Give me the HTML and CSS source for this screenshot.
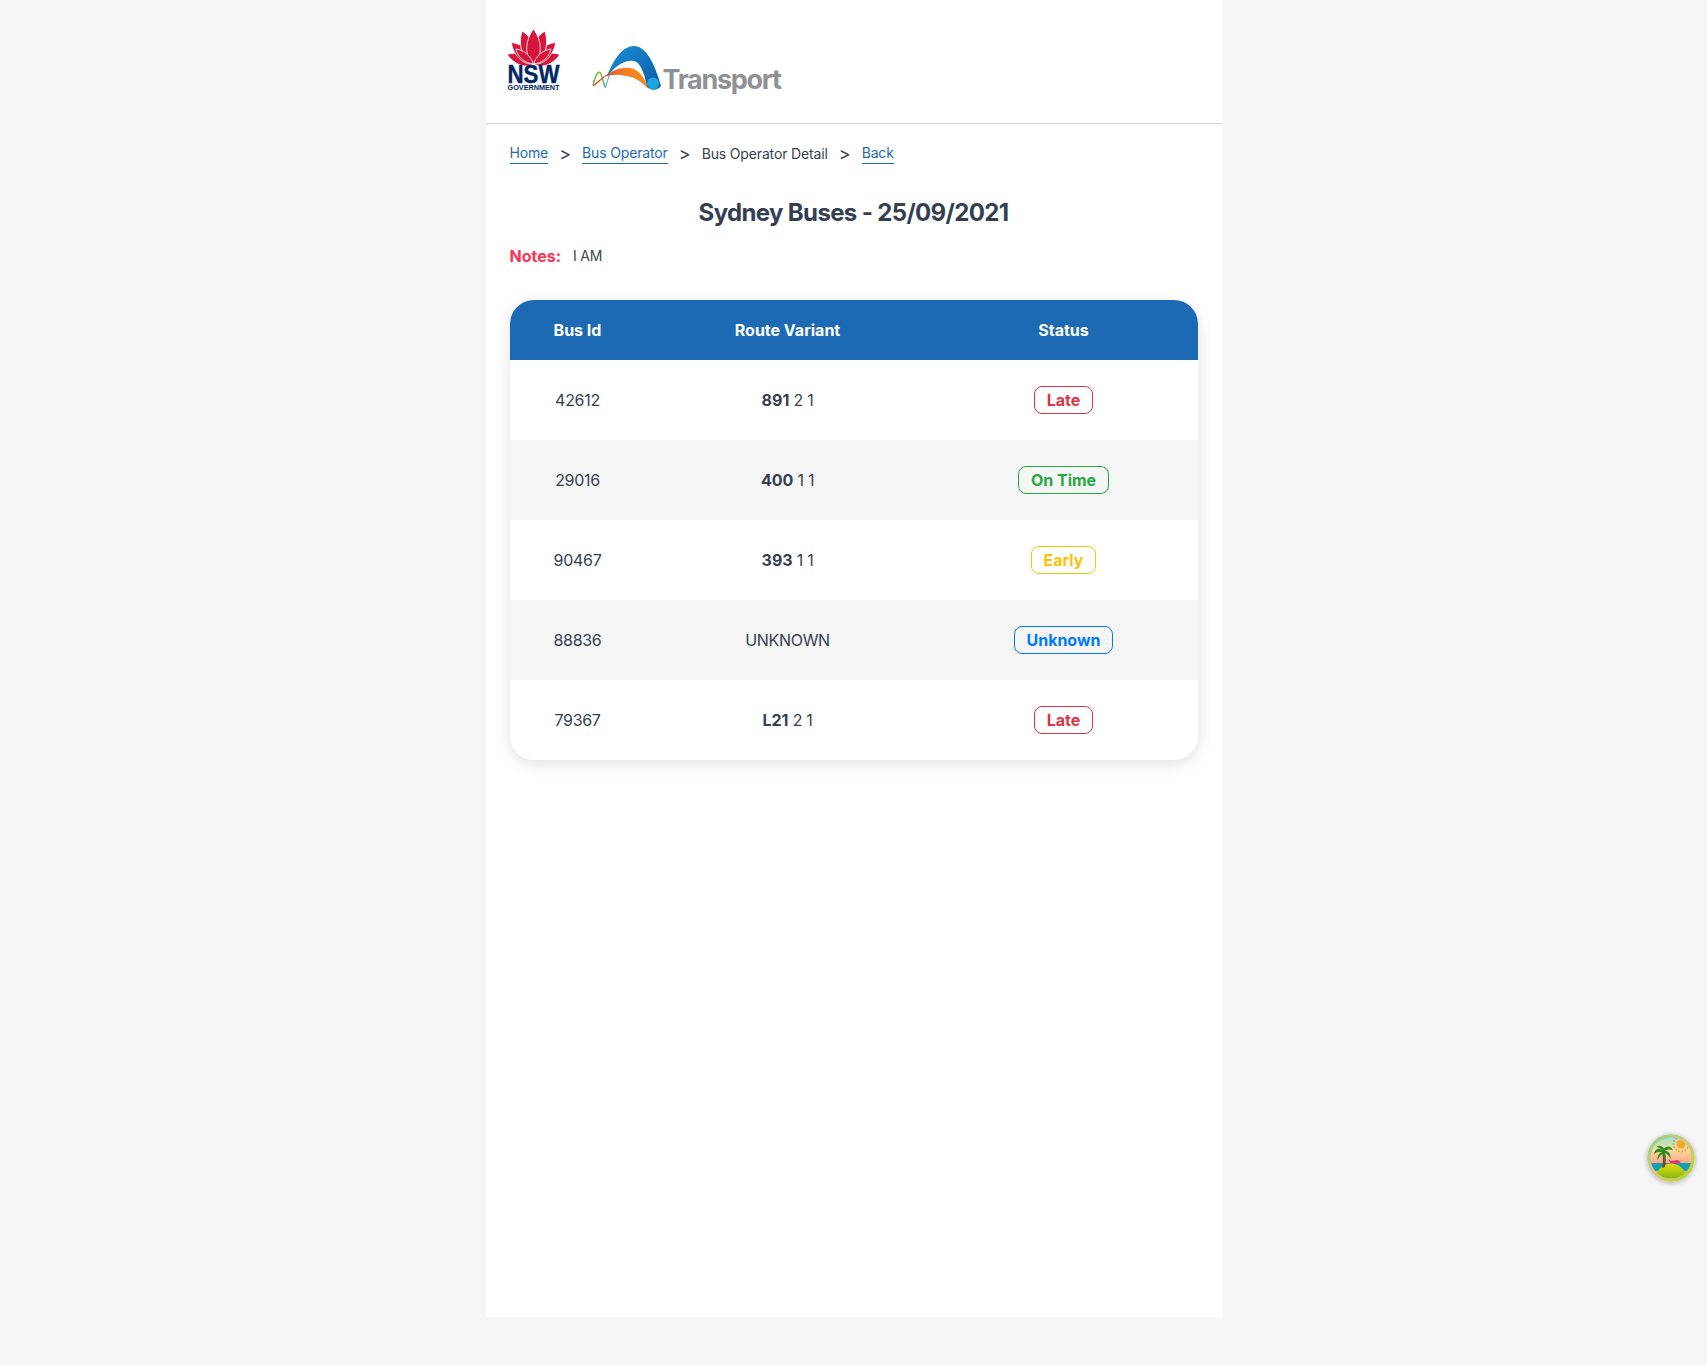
FILE: index.html
```html
<!DOCTYPE html>
<html>
<head>
    <title>Sydney Buses</title>
    <link rel="stylesheet" href="styles.css">
</head>
<body>
    <div class="page">
        <header class="header">
            <svg class="logo-nsw" viewBox="-4 0 64 64">
                <defs>
                    <path id="petal" d="M27.5 36C17 27 20 11 27.5 1C35 11 38 27 27.5 36Z"/>
                </defs>
                <g fill="#d7153a" stroke="#fff" stroke-width="0.8">
                    <use href="#petal" transform="rotate(-70 27.5 36) translate(27.5 36) scale(.8) translate(-27.5 -36)"/>
                    <use href="#petal" transform="rotate(70 27.5 36) translate(27.5 36) scale(.8) translate(-27.5 -36)"/>
                    <use href="#petal" transform="rotate(-46 27.5 36) translate(27.5 36) scale(.88) translate(-27.5 -36)"/>
                    <use href="#petal" transform="rotate(46 27.5 36) translate(27.5 36) scale(.88) translate(-27.5 -36)"/>
                    <use href="#petal" transform="rotate(-19 27.5 36)"/>
                    <use href="#petal" transform="rotate(19 27.5 36)"/>
                    <use href="#petal"/>
                    <path d="M27.5 36C19 35 12 30 10 21C18 22 25 28 27.5 36Z"/>
                    <path d="M27.5 36C36 35 43 30 45 21C37 22 30 28 27.5 36Z"/>
                </g>
                <text class="nsw-word" x="27.5" y="55" textLength="52" lengthAdjust="spacingAndGlyphs">NSW</text>
                <text class="nsw-gov" x="27.5" y="62" textLength="52" lengthAdjust="spacingAndGlyphs">GOVERNMENT</text>
            </svg>
            <svg class="logo-transport" viewBox="0 0 196 52">
                <defs>
                    <linearGradient id="arcBlue" x1="0" y1="0" x2="1" y2="1">
                        <stop offset="0" stop-color="#1b8fd6"/>
                        <stop offset="1" stop-color="#0b5aa5"/>
                    </linearGradient>
                    <linearGradient id="arcOrange" x1="0" y1="0" x2="1" y2="0">
                        <stop offset="0" stop-color="#e8402a"/>
                        <stop offset="0.5" stop-color="#f58220"/>
                        <stop offset="1" stop-color="#f28c1e"/>
                    </linearGradient>
                </defs>
                <path d="M3 41C6 29 9 26 11 30C13 35 14 41 15 43" fill="none" stroke="#6cbb3c" stroke-width="1.5"/>
                <path d="M3 42C7 39 10 36 14 33" fill="none" stroke="#e8402a" stroke-width="1.5"/>
                <path d="M15 44C17 39 18 34 20 30" fill="none" stroke="#55b7e6" stroke-width="1.2"/>
                <path d="M12 34C22 26 32 23 40 24C48 25 54 32 59 45L56 43C51 37 44 33 36 32C28 30 20 30 12 34Z" fill="url(#arcOrange)"/>
                <path d="M17 32C22 19 31 2 44 2C56 2 65 20 71 42C67 47 60 47 57 42C54 28 50 18 44 17C35 15 26 22 17 32Z" fill="url(#arcBlue)"/>
                <circle cx="63" cy="39.5" r="6" fill="#1fa3e0"/>
                <text class="transport-word" x="72.5" y="45">Transport</text>
            </svg>
        </header>

        <nav class="crumbs">
            <a href="#">Home</a>
            <span class="sep">&gt;</span>
            <a href="#">Bus Operator</a>
            <span class="sep">&gt;</span>
            <span>Bus Operator Detail</span>
            <span class="sep">&gt;</span>
            <a href="#">Back</a>
        </nav>

        <h1 class="title">Sydney Buses - 25/09/2021</h1>

        <div class="notes">
            <span class="notes-label">Notes:</span>
            <span class="notes-text">I AM</span>
        </div>

        <div class="card">
            <table class="buses">
                <colgroup>
                    <col class="col-id">
                    <col class="col-route">
                    <col class="col-status">
                </colgroup>
                <thead>
                    <tr>
                        <th>Bus Id</th>
                        <th>Route Variant</th>
                        <th>Status</th>
                    </tr>
                </thead>
                <tbody>
                    <tr>
                        <td>42612</td>
                        <td><b>891</b> 2 1</td>
                        <td><span class="status late">Late</span></td>
                    </tr>
                    <tr>
                        <td>29016</td>
                        <td><b>400</b> 1 1</td>
                        <td><span class="status ontime">On Time</span></td>
                    </tr>
                    <tr>
                        <td>90467</td>
                        <td><b>393</b> 1 1</td>
                        <td><span class="status early">Early</span></td>
                    </tr>
                    <tr>
                        <td>88836</td>
                        <td>UNKNOWN</td>
                        <td><span class="status unknown">Unknown</span></td>
                    </tr>
                    <tr>
                        <td>79367</td>
                        <td><b>L21</b> 2 1</td>
                        <td><span class="status late">Late</span></td>
                    </tr>
                </tbody>
            </table>
        </div>
    </div>

    <svg class="theme-btn" viewBox="0 0 48 48">
        <defs>
            <linearGradient id="ring" x1="0" y1="0" x2="1" y2="1">
                <stop offset="0" stop-color="#86d47e"/>
                <stop offset="0.5" stop-color="#d9c78a"/>
                <stop offset="1" stop-color="#a8d60e"/>
            </linearGradient>
            <linearGradient id="sky" x1="0" y1="0" x2="0" y2="1">
                <stop offset="0" stop-color="#8fe0d8"/>
                <stop offset="0.3" stop-color="#fddc9a"/>
                <stop offset="0.7" stop-color="#fc9a86"/>
            </linearGradient>
            <linearGradient id="hill" x1="0" y1="0" x2="0" y2="1">
                <stop offset="0" stop-color="#e2e00c"/>
                <stop offset="1" stop-color="#86b80e"/>
            </linearGradient>
            <clipPath id="inner"><circle cx="24" cy="24" r="20.5"/></clipPath>
        </defs>
        <circle cx="24" cy="24" r="24" fill="url(#ring)"/>
        <g clip-path="url(#inner)">
            <rect x="3" y="3" width="42" height="42" fill="url(#sky)"/>
            <circle cx="34" cy="10" r="4.5" fill="#f9a825"/>
            <circle cx="34" cy="10" r="7.5" fill="none" stroke="#f58f2c" stroke-width="1.8" stroke-dasharray="1.6 1.6"/>
            <rect x="3" y="29" width="42" height="8" fill="#12a0b4"/>
            <path d="M21 25L24 27L31 26L34 29L24 30Z" fill="#e8336b"/>
            <path d="M9 42C10 35 17 29.5 24 29.5C31 29.5 38 35 39 42C30 45 18 45 9 42Z" fill="url(#hill)"/>
        </g>
        <path d="M15 34C16.5 29 16 23 15 18L17.5 18C19 23 19 29 18 33Z" fill="#7a4a22"/>
        <path d="M16 18C13 13 8 14 7 20C10 17.5 13 17.5 15 18.5C12 19 10 22 10.5 26C12.5 22.5 14 20.5 16 19.5C16 22 16.5 24 18 27C19.5 23.5 19 21 17.5 19C20 19.5 22.5 22 23.5 25C24.5 20 21 16.5 18 17C20 15 23 15 26 16.5C24.5 12 20 11 17 14.5C15 11.5 12 11 9 12.5C12 13.5 14.5 15 16 18Z" fill="#2c8c2c"/>
    </svg>
</body>
</html>
```

FILE: styles.css
```css
body {
    margin: 0;
    background-color: #f6f6f6;
    font-family: Inter, "Noto Sans", sans-serif;
    color: #343f52;
}

.page {
    width: 736px;
    min-height: 1317px;
    margin: 0 auto;
    box-sizing: border-box;
    background-color: #fff;
}

.header {
    display: flex;
    align-items: flex-start;
    gap: 24px;
    height: 124px;
    box-sizing: border-box;
    padding: 28px 0 0 16px;
    border-bottom: 1px solid #cfd2d4;
}

.logo-nsw {
    width: 64px;
    height: 64px;
    overflow: visible;
}

.logo-transport {
    width: 196px;
    height: 52px;
    margin-top: 16px;
}

.nsw-word {
    font-family: "Liberation Sans", sans-serif;
    font-size: 26px;
    font-weight: 700;
    fill: #002664;
    stroke: #002664;
    stroke-width: 0.4px;
    text-anchor: middle;
}

.nsw-gov {
    font-family: "Liberation Sans", sans-serif;
    font-size: 7px;
    font-weight: 700;
    fill: #002664;
    text-anchor: middle;
}

.transport-word {
    font-family: Inter, sans-serif;
    font-size: 27px;
    font-weight: 700;
    letter-spacing: -1.3px;
    fill: #8e9196;
}

.crumbs {
    display: flex;
    align-items: center;
    gap: 11px;
    padding: 19px 24px 0;
    font-size: 14px;
    line-height: 20px;
    letter-spacing: -0.15px;
}

.crumbs a {
    color: #1d6ab4;
    text-decoration: none;
    border-bottom: 1px solid #1d6ab4;
}

.sep {
    font-size: 18px;
    letter-spacing: 0;
}

.title {
    margin: 33px 0 0;
    font-size: 24px;
    line-height: 32px;
    font-weight: 700;
    letter-spacing: -0.65px;
    text-align: center;
}

.notes {
    display: flex;
    align-items: center;
    gap: 12px;
    margin: 15px 24px 0;
    line-height: 24px;
}

.notes-label {
    font-size: 16px;
    font-weight: 700;
    color: #ff3355;
}

.notes-text {
    font-size: 14px;
    letter-spacing: -0.2px;
    color: #444;
}

.card {
    margin: 32px 24px 0;
    border-radius: 24px;
    overflow: hidden;
    background-color: #fff;
    box-shadow: 0 4px 16px rgba(0, 0, 0, 0.12);
}

.buses {
    width: 100%;
    border-collapse: collapse;
    table-layout: fixed;
    font-size: 16px;
    letter-spacing: -0.3px;
    text-align: center;
}

.col-id {
    width: 136px;
}

.col-route {
    width: 284px;
}

.buses th {
    height: 60px;
    padding: 0;
    color: #fff;
    font-weight: 700;
    letter-spacing: 0;
    background-color: #1d6ab4;
}

.buses td {
    height: 80px;
    padding: 0;
}

.buses tbody tr:nth-child(even) {
    background-color: #f5f5f5;
}

.buses b {
    font-weight: 700;
    letter-spacing: 0;
}

.status {
    display: inline-block;
    padding: 0 11.5px;
    line-height: 26px;
    border: 1px solid;
    border-radius: 8px;
    font-weight: 700;
    letter-spacing: 0;
    vertical-align: middle;
}

.late {
    color: #dc3545;
}

.ontime {
    color: #28a745;
}

.early {
    color: #ffc107;
}

.unknown {
    color: #007bff;
}

.theme-btn {
    position: fixed;
    right: 12px;
    bottom: 183px;
    width: 48px;
    height: 48px;
    border-radius: 50%;
    box-shadow: 0 1px 5px rgba(0, 0, 0, 0.3);
}
```
